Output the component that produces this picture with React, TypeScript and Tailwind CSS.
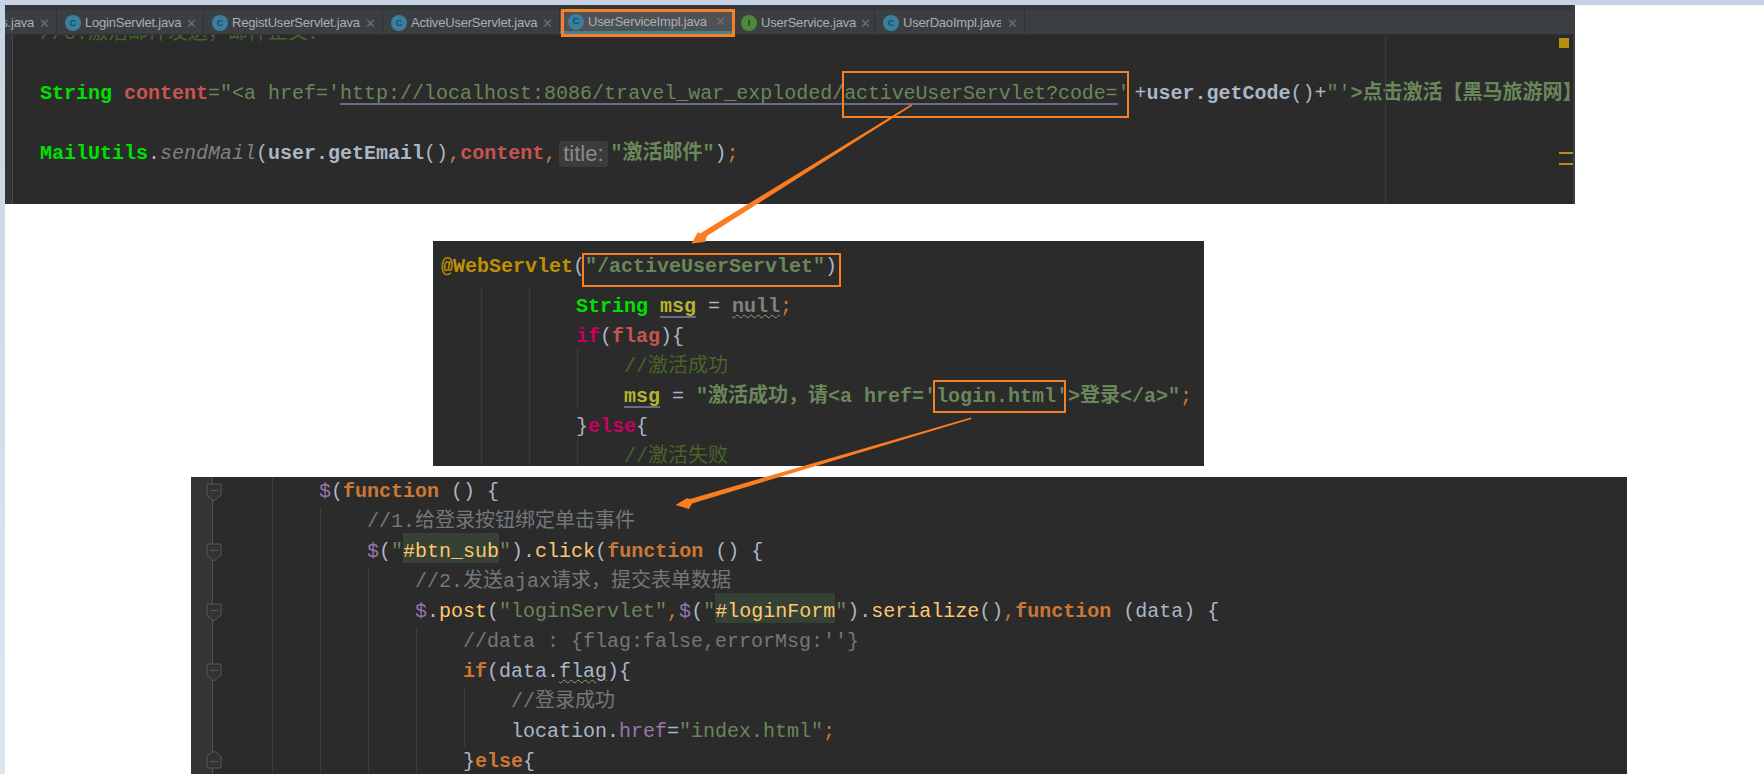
import type { ReactNode } from 'react';

const MONO = "font-['Liberation_Mono','Noto_Sans_CJK_SC',monospace] text-[20px] leading-[30px] whitespace-pre";

const tabs = [
  { name: 'LoginServlet.java', w: 'w-[147px]', kind: 'c' },
  { name: 'RegistUserServlet.java', w: 'w-[179px]', kind: 'c' },
  { name: 'ActiveUserServlet.java', w: 'w-[177px]', kind: 'c' },
  { name: 'UserServiceImpl.java', w: 'w-[173px]', kind: 'c', active: true },
  { name: 'UserService.java', w: 'w-[142px]', kind: 'i' },
  { name: 'UserDaoImpl.java', w: 'w-[150px]', kind: 'c', clip: true },
];

function TabIcon({ kind }: { kind: string }) {
  return (
    <span
      className={`w-[16px] h-[16px] shrink-0 rounded-full flex items-center justify-center text-[9px] font-bold leading-none ${
        kind === 'c' ? 'bg-[#3a7f9f] text-[#1f4a5e]' : 'bg-[#4f8a3c] text-[#1f3d18]'
      }`}
    >
      {kind === 'c' ? 'C' : 'I'}
    </span>
  );
}

function Tab({ name, w, kind, active, clip }: { name: string; w: string; kind: string; active?: boolean; clip?: boolean }) {
  return (
    <div
      className={`${w} shrink-0 h-full flex items-center pl-[8px] gap-[4px] border-r border-[#2f3233] pt-[2px] ${
        active ? 'bg-[#4e5254] border-b-[3px] border-b-[#4a7f8f]' : ''
      }`}
    >
      <TabIcon kind={kind} />
      <span className={`text-[#a9b0b5] text-[13px] tracking-[-0.2px] ${clip ? 'w-[98px] overflow-hidden whitespace-nowrap' : ''}`}>{name}</span>
      <span className="ml-auto mr-[6px] text-[#6d7173] text-[13px] leading-none">✕</span>
    </div>
  );
}

function Guide({ className }: { className: string }) {
  return <div className={`absolute w-px bg-[#3a3c3d] ${className}`} />;
}

function Fold({ up }: { up?: boolean }) {
  return (
    <svg width="16" height="19" viewBox="0 0 16 19" className="block" fill="#303234" stroke="#55585a" strokeWidth="1">
      <path d={up ? 'M1 18V6L8 1L15 6V18Z' : 'M1 1H15V12L8 18L1 12Z'} />
      <path d={up ? 'M4 11.5H12' : 'M4 7.5H12'} />
    </svg>
  );
}

function Hl({ children }: { children: ReactNode }) {
  return (
    <span className="relative inline-block">
      <span className="absolute left-0 right-0 top-[-4px] h-[30px] bg-[#344134]" />
      <span className="relative">{children}</span>
    </span>
  );
}

function Wavy({ children, className = '' }: { children: ReactNode; className?: string }) {
  return <span className={`underline decoration-wavy decoration-[#9a9a7a] decoration-1 underline-offset-2 ${className}`}>{children}</span>;
}

export default function App() {
  const green = 'text-[#6a8759]';
  const orange = 'text-[#cc7832]';
  const plain = 'text-[#a9b7c6]';
  const gray = 'text-[#808080]';
  const dim = 'text-[#74777a]';
  const purple = 'text-[#9876aa]';
  const gold = 'text-[#ffc66d]';
  const hot = 'text-[#c7005f] font-bold';
  const lime = 'text-[#00e000] font-bold';
  const red = 'text-[#c75450] font-bold';
  const olive = 'text-[#b5b52c] font-bold underline underline-offset-4 decoration-[#6a6a8a]';
  const darkGreen = 'text-[#476526]';
  const link = 'underline underline-offset-4 decoration-[#6a6a8a]';

  return (
    <div className="relative w-[1764px] h-[774px] overflow-hidden bg-white pl-[5px] pt-[5px]">
      {/* light blue edge of the window behind the pasted shots */}
      <div className="absolute left-0 top-0 w-full h-[5px] bg-[#c6d1e4]" />
      <div className="absolute left-0 top-0 w-[5px] h-full bg-linear-to-b from-[#c8d3e5] to-[#dce6f3]" />

      {/* first shot: editor with tabs */}
      <section className="w-[1570px] h-[199px] bg-[#2b2b2b] border-r-2 border-r-[#3c3e3f] flex flex-col overflow-hidden">
        <div className="h-[30px] shrink-0 bg-[#3c3f41] border-t-[5px] border-t-[#35383a] border-b border-b-[#2f3233] flex items-center font-['Liberation_Sans',sans-serif]">
          <div className="w-[52px] shrink-0 h-full flex items-center justify-end overflow-hidden border-r border-[#2f3233] pt-[2px] pr-[6px] gap-[5px]">
            <span className="text-[#a9b0b5] text-[13px] tracking-[-0.2px]">s.java</span>
            <span className="text-[#6d7173] text-[13px] leading-none">✕</span>
          </div>
          {tabs.map((t) => (
            <Tab key={t.name} {...t} />
          ))}
        </div>
        <div className="relative flex-1 overflow-hidden pl-[35px]">
          <div className="absolute left-0 top-0 bottom-0 w-[8px] bg-[#313335] border-r border-r-[#4a4a4a]" />
          <Guide className="left-[1380px] top-0 bottom-0" />
          <div className="absolute left-[1554px] top-[3px] w-[10px] h-[10px] bg-[#b8900f]" />
          <div className="absolute left-[1554px] top-[117px] w-[14px] h-[2px] bg-[#b8900f]" />
          <div className="absolute left-[1554px] top-[128px] w-[14px] h-[2px] bg-[#b8900f]" />
          <div className={`${MONO} -mt-[16px]`}>
            <div className={darkGreen}>//3.激活邮件发送，邮件正文：</div>
            <div> </div>
            <div>
              <span className={lime}>String</span> <span className={red}>content</span>
              <span className={green}>="&lt;a href='</span>
              <span className={`${green} ${link}`}>http://localhost:8086/travel_war_exploded/</span>
              <span className={`${green} ${link} tracking-[-0.12px]`}>activeUserServlet?code=</span>
              <span className={green}>'</span>
              <span className={`${plain} ml-[5px]`}>+</span>
              <span className={`${plain} font-bold`}>user.getCode</span>
              <span className={plain}>()+</span>
              <span className={green}>"'</span>
              <span className={`${green} font-bold`}>&gt;点击激活【黑马旅游网】</span>
            </div>
            <div> </div>
            <div>
              <span className={lime}>MailUtils</span>
              <span className={plain}>.</span>
              <span className={`${gray} italic`}>sendMail</span>
              <span className={plain}>(</span>
              <span className={`${plain} font-bold`}>user.getEmail</span>
              <span className={plain}>()</span>
              <span className={orange}>,</span>
              <span className={red}>content</span>
              <span className={orange}>,</span>
              <span className="inline-block align-middle h-[26px] leading-[26px] ml-[3px] mr-[3px] px-[4px] rounded-[3px] bg-[#3b3b3b] text-[#8a8a8a] text-[22px] font-['Liberation_Sans',sans-serif]">title:</span>
              <span className={`${green} font-bold`}>"激活邮件"</span>
              <span className={plain}>)</span>
              <span className={orange}>;</span>
            </div>
          </div>
        </div>
      </section>

      {/* second shot: servlet */}
      <section className={`relative ml-[428px] mt-[37px] w-[771px] h-[225px] bg-[#2b2b2b] pt-[11px] pl-[8px] overflow-hidden ${MONO}`}>
        <Guide className="left-[48px] top-[46px] bottom-0" />
        <Guide className="left-[96px] top-[46px] bottom-0" />
        <Guide className="left-[144px] top-[107px] h-[60px]" />
        <Guide className="left-[144px] top-[197px] bottom-0" />
        <div>
          <span className="text-[#c09000] font-bold">@WebServlet</span>
          <span className={plain}>(</span>
          <span className={`${green} font-bold`}>"/activeUserServlet"</span>
          <span className={plain}>)</span>
        </div>
        <div className="pl-[135px] mt-[10px]">
          <span className={lime}>String</span> <span className={olive}>msg</span>
          <span className={plain}> = </span>
          <Wavy className={`${gray} font-bold`}>null</Wavy>
          <span className={orange}>;</span>
        </div>
        <div className="pl-[135px]">
          <span className={hot}>if</span>
          <span className={plain}>(</span>
          <span className={red}>flag</span>
          <span className={plain}>){'{'}</span>
        </div>
        <div className={`pl-[183px] ${darkGreen}`}>//激活成功</div>
        <div className="pl-[183px]">
          <span className={olive}>msg</span>
          <span className={plain}> = </span>
          <span className={`${green} font-bold`}>"激活成功，请&lt;a href='login.html'&gt;登录&lt;/a&gt;"</span>
          <span className={orange}>;</span>
        </div>
        <div className="pl-[135px]">
          <span className={plain}>{'}'}</span>
          <span className={hot}>else</span>
          <span className={plain}>{'{'}</span>
        </div>
        <div className={`pl-[183px] ${darkGreen}`}>//激活失败</div>
      </section>

      {/* third shot: login script */}
      <section className={`relative ml-[186px] mt-[11px] w-[1436px] h-[297px] bg-[#2b2b2b] flex overflow-hidden ${MONO}`}>
        <div className="w-[22px] shrink-0 bg-[#323436] border-r border-r-[#4f5254] relative">
          <div className="absolute left-[15px] top-[6px]"><Fold /></div>
          <div className="absolute left-[15px] top-[66px]"><Fold /></div>
          <div className="absolute left-[15px] top-[126px]"><Fold /></div>
          <div className="absolute left-[15px] top-[186px]"><Fold /></div>
          <div className="absolute left-[15px] top-[273px]"><Fold up /></div>
        </div>
        <Guide className="left-[81px] top-0 bottom-0" />
        <Guide className="left-[129px] top-[30px] bottom-0" />
        <Guide className="left-[177px] top-[90px] bottom-0" />
        <Guide className="left-[225px] top-[150px] bottom-0" />
        <Guide className="left-[273px] top-[210px] h-[60px]" />
        <div className="pl-[106px]">
          <div>
            <span className={purple}>$</span>
            <span className={plain}>(</span>
            <span className={`${orange} font-bold`}>function</span>
            <span className={plain}> () {'{'}</span>
          </div>
          <div className={`pl-[48px] ${dim}`}>//1.给登录按钮绑定单击事件</div>
          <div className="pl-[48px]">
            <span className={purple}>$</span>
            <span className={plain}>(</span>
            <span className={green}>"</span>
            <Hl><span className={gold}>#btn_sub</span></Hl>
            <span className={green}>"</span>
            <span className={plain}>).</span>
            <span className={gold}>click</span>
            <span className={plain}>(</span>
            <span className={`${orange} font-bold`}>function</span>
            <span className={plain}> () {'{'}</span>
          </div>
          <div className={`pl-[96px] ${dim}`}>//2.发送ajax请求，提交表单数据</div>
          <div className="pl-[96px]">
            <span className={purple}>$</span>
            <span className={plain}>.</span>
            <span className={gold}>post</span>
            <span className={plain}>(</span>
            <span className={green}>"loginServlet"</span>
            <span className={orange}>,</span>
            <span className={purple}>$</span>
            <span className={plain}>(</span>
            <span className={green}>"</span>
            <Hl><span className={gold}>#loginForm</span></Hl>
            <span className={green}>"</span>
            <span className={plain}>).</span>
            <span className={gold}>serialize</span>
            <span className={plain}>()</span>
            <span className={orange}>,</span>
            <span className={`${orange} font-bold`}>function</span>
            <span className={plain}> (data) {'{'}</span>
          </div>
          <div className={`pl-[144px] ${dim}`}>//data : {'{'}flag:false,errorMsg:''{'}'}</div>
          <div className="pl-[144px]">
            <span className={`${orange} font-bold`}>if</span>
            <span className={plain}>(data.</span>
            <Wavy className={plain}>flag</Wavy>
            <span className={plain}>){'{'}</span>
          </div>
          <div className={`pl-[192px] ${dim}`}>//登录成功</div>
          <div className="pl-[192px]">
            <span className={plain}>location.</span>
            <span className={purple}>href</span>
            <span className={plain}>=</span>
            <span className={green}>"index.html"</span>
            <span className={orange}>;</span>
          </div>
          <div className="pl-[144px]">
            <span className={plain}>{'}'}</span>
            <span className={`${orange} font-bold`}>else</span>
            <span className={plain}>{'{'}</span>
          </div>
        </div>
      </section>

      {/* orange annotations drawn over the shots */}
      <div className="absolute left-[561px] top-[9px] w-[174px] h-[28px] border-[3px] border-[#f58025]" />
      <div className="absolute left-[842px] top-[71px] w-[287px] h-[47px] border-[2px] border-[#f58025]" />
      <div className="absolute left-[582px] top-[253px] w-[259px] h-[34px] border-[2px] border-[#f58025]" />
      <div className="absolute left-[933px] top-[380px] w-[133px] h-[33px] border-[2px] border-[#f58025]" />
      <svg className="absolute left-0 top-0" width="1764" height="774" viewBox="0 0 1764 774" fill="#fb7d22">
        <polygon points="911,104.5 912.5,105.5 707,236 705,242 691.5,243.5 698,232 700,233.5" />
        <polygon points="971,417.5 971.5,419 692,503.5 689,509 675.5,505 686.7,498.3 690,499" />
      </svg>
    </div>
  );
}
